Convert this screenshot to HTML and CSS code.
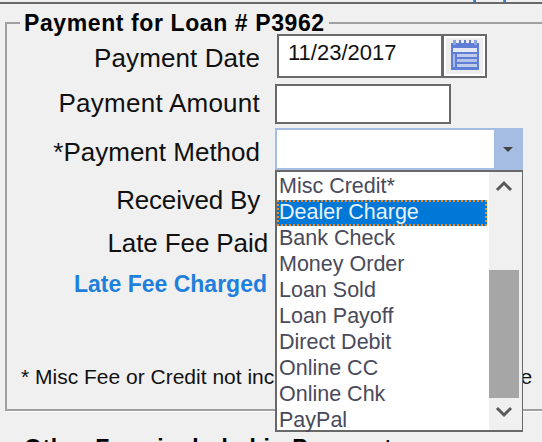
FILE: index.html
```html
<!DOCTYPE html>
<html lang="en">
<head>
    <meta charset="UTF-8">
    <meta name="viewport" content="width=device-width, initial-scale=1.0">
    <title>Payment for Loan</title>
    <link rel="stylesheet" href="styles.css">
</head>
<body>

<div class="top-line"></div>

<fieldset class="group">
    <legend>Payment for Loan # P3962</legend>

    <div class="row row-date">
        <label>Payment Date</label>
        <div class="date-box">
            <input class="date-input" type="text" value="11/23/2017">
            <button class="cal-btn" type="button">
                <svg width="30" height="32" viewBox="0 0 30 32">
                    <rect x="1" y="3" width="28" height="27" fill="#5f7fd6"/>
                    <rect x="3" y="0" width="3" height="5" fill="#8ea4e2"/>
                    <rect x="9" y="0" width="2" height="5" fill="#5f7fd6"/>
                    <rect x="14" y="0" width="2" height="5" fill="#5f7fd6"/>
                    <rect x="19" y="0" width="2" height="5" fill="#5f7fd6"/>
                    <rect x="24" y="0" width="3" height="5" fill="#8ea4e2"/>
                    <rect x="3" y="8" width="24" height="4" fill="#e6e9f4"/>
                    <rect x="7" y="14" width="20" height="3" fill="#c3cdea"/>
                    <rect x="7" y="19" width="20" height="3" fill="#b5c1e6"/>
                    <rect x="7" y="24" width="20" height="3" fill="#c3cdea"/>
                    <rect x="3" y="14" width="2" height="13" fill="#a9b8e4"/>
                </svg>
            </button>
        </div>
    </div>

    <div class="row row-amount">
        <label>Payment Amount</label>
        <input class="amount-input" type="text">
    </div>

    <div class="row row-method">
        <label>*Payment Method</label>
        <div class="combo">
            <div class="combo-text"></div>
            <div class="combo-btn"><span class="arrow"></span></div>

            <div class="drop">
                <ul class="drop-list">
                    <li>Misc Credit*</li>
                    <li class="selected">Dealer Charge</li>
                    <li>Bank Check</li>
                    <li>Money Order</li>
                    <li>Loan Sold</li>
                    <li>Loan Payoff</li>
                    <li>Direct Debit</li>
                    <li>Online CC</li>
                    <li>Online Chk</li>
                    <li>PayPal</li>
                </ul>
                <div class="scroll">
                    <svg class="chev" width="18" height="12" viewBox="0 0 18 12"><path d="M2 10 L9 3 L16 10" fill="none" stroke="#5a5a5a" stroke-width="3"/></svg>
                    <div class="thumb"></div>
                    <svg class="chev" width="18" height="12" viewBox="0 0 18 12"><path d="M2 2 L9 9 L16 2" fill="none" stroke="#5a5a5a" stroke-width="3"/></svg>
                </div>
            </div>
        </div>
    </div>

    <div class="row row-received"><label>Received By</label></div>
    <div class="row row-paid"><label>Late Fee Paid</label></div>
    <div class="row row-charged"><label class="link">Late Fee Charged</label></div>

    <p class="note">* Misc Fee or Credit not included in Loan Fee Revenue</p>
</fieldset>

<h3 class="other">Other Fees included in Payment</h3>

</body>
</html>
```

FILE: styles.css
```css
* { box-sizing: border-box; font-family: "Liberation Sans", Arial, sans-serif; }
html, body { margin: 0; padding: 0; height: 442px; overflow: hidden; }
body { background: #f0f0f0; color: #111; width: 542px; }

.top-line { height: 4px; border-bottom: 2px solid #696969; background: linear-gradient(90deg, #c87a20 50%, #2a7fd0 50%) 473px 0 / 3px 2px no-repeat, linear-gradient(90deg, #c87a20 50%, #2a7fd0 50%) 503px 0 / 3px 2px no-repeat; }

.group { margin: 8px 0 0 5px; padding: 0 0 20px 0; width: 580px; border: 2px solid #a0a0a0; box-shadow: 1px 1px 0 #fff; }
.group legend { margin-left: 13px; padding: 0 4px 0 4px; font-size: 23px; font-weight: bold; line-height: 22px; color: #000; letter-spacing: 0.6px; white-space: nowrap; }

.row { display: flex; align-items: center; }
.row label { width: 253px; text-align: right; font-size: 26px; letter-spacing: 0.1px; flex: none; }
.row .link { font-size: 23px; font-weight: bold; color: #1f7fdc; width: 260px; letter-spacing: 0; }

.row-date { height: 44px; }
.row-amount { height: 40px; margin-top: 6px; }
.row-method { height: 42px; margin-top: 4px; }
.row-received { height: 48px; margin-top: 6px; }
.row-paid { height: 38px; }
.row-charged { height: 44px; }

.row-date label { padding-top: 4px; }
.row-amount label { padding-bottom: 2px; letter-spacing: 0.25px; }
.row-method label { padding-top: 6px; letter-spacing: 0; }
.row-received label { letter-spacing: -0.2px; }
.row-paid label { width: 261px; letter-spacing: -0.1px; }

.row-date .date-box { margin-left: 17px; }
.row-amount .amount-input, .row-method .combo { margin-left: 15px; }

.date-box { display: flex; width: 210px; height: 44px; border: 2px solid #696969; background: #fff; }
.date-input { flex: none; width: 165px; height: 40px; border: 0; border-right: 3px solid #696969; padding: 0 0 6px 9px; font-size: 22px; color: #111; background: #fff; outline: none; }
.cal-btn { flex: 1; height: 40px; padding: 0; border: 2px solid #fff; background: #ededed; display: flex; align-items: center; justify-content: center; }

.amount-input { width: 176px; height: 40px; border: 2px solid #696969; background: #fff; outline: none; }

.combo { position: relative; display: flex; width: 248px; height: 42px; border: 2px solid #a5bde2; background: #fff; }
.combo-text { flex: 1; }
.combo-btn { width: 27px; background: #a5bde2; display: flex; align-items: center; justify-content: center; }
.arrow { width: 0; height: 0; border-left: 5px solid transparent; border-right: 5px solid transparent; border-top: 5px solid #444; }

.drop { position: absolute; left: -2px; top: 40px; width: 248px; height: 262px; border: 2px solid #696969; background: #fff; display: flex; }
.drop-list { list-style: none; margin: 0 2px 0 0; padding: 2px 0 0 0; width: 210px; flex: none; }
.drop-list li { height: 26px; line-height: 25px; padding-left: 2px; font-size: 21.5px; color: #4a4a5a; white-space: nowrap; }
.drop-list .selected { background: #0078d7; color: #e8f2fb; outline: 2px dotted #f08a24; outline-offset: -2px; }

.scroll { flex: 1; background: #f0f0f0; display: flex; flex-direction: column; align-items: center; padding-right: 3px; }
.scroll .chev { flex: none; margin: 8px 0; }
.scroll .thumb { width: 30px; height: 128px; margin-top: 70px; background: #a6a6a6; }

.note { margin: 56px 0 0 14px; padding-top: 3px; font-size: 21px; line-height: 24px; white-space: nowrap; color: #111; }

.other { margin: 25px 0 0 24px; font-size: 23px; font-weight: bold; line-height: 24px; letter-spacing: 0.6px; color: #000; white-space: nowrap; }
```
